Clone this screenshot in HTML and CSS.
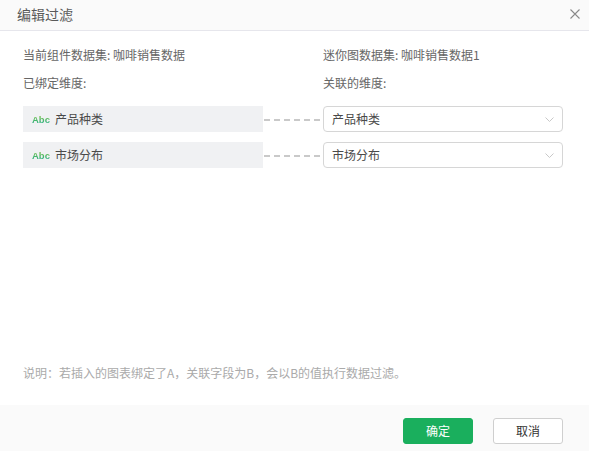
FILE: index.html
```html
<!DOCTYPE html>
<html lang="zh">
<head>
<meta charset="utf-8">
<title>编辑过滤</title>
<link rel="stylesheet" href="styles.css">
</head>
<body>
<div class="dialog">
  <div class="header">
    <span class="title">编辑过滤</span>
    <svg class="close" width="10" height="10" viewBox="0 0 10 10"><path d="M0.5 0.5 L9.5 9.5 M9.5 0.5 L0.5 9.5" stroke="#8a8a8a" stroke-width="1.1" fill="none"/></svg>
  </div>
  <div class="content">
    <div class="grid">
      <div class="label left">当前组件数据集: 咖啡销售数据</div>
      <div class="label right">迷你图数据集: 咖啡销售数据1</div>
      <div class="label left sub">已绑定维度:</div>
      <div class="label right sub">关联的维度:</div>

      <div class="field"><span class="abc">Abc</span><span class="fname">产品种类</span></div>
      <div class="dash"></div>
      <div class="select"><span>产品种类</span><svg class="chev" width="9" height="5" viewBox="0 0 9 5"><path d="M0.5 0.5 L4.5 4.5 L8.5 0.5" stroke="#c8c8c8" fill="none"/></svg></div>

      <div class="field"><span class="abc">Abc</span><span class="fname">市场分布</span></div>
      <div class="dash"></div>
      <div class="select"><span>市场分布</span><svg class="chev" width="9" height="5" viewBox="0 0 9 5"><path d="M0.5 0.5 L4.5 4.5 L8.5 0.5" stroke="#c8c8c8" fill="none"/></svg></div>
    </div>
    <div class="note">说明：若插入的图表绑定了A，关联字段为B，会以B的值执行数据过滤。</div>
  </div>
  <div class="footer">
    <button class="btn primary">确定</button>
    <button class="btn">取消</button>
  </div>
</div>
</body>
</html>
```

FILE: styles.css
```css
* { box-sizing: border-box; }
html, body { margin: 0; padding: 0; }
body {
  font-family: "Noto Sans CJK SC", "Noto Sans", sans-serif;
  font-size: 12px;
  color: #666;
  background: #fff;
}
.dialog {
  width: 589px;
  height: 451px;
  display: flex;
  flex-direction: column;
}
.header {
  height: 31px;
  background: #fafafa;
  border-bottom: 1px solid #e6e6ec;
  display: flex;
  align-items: center;
  justify-content: space-between;
  padding: 0 9px 2px 17px;
}
.title {
  font-size: 14px;
  color: #5a5a5a;
  line-height: 18px;
}
.close { display: block; }
.content {
  flex: 1;
  display: flex;
  flex-direction: column;
  justify-content: space-between;
  padding: 16px 26px 24px 23px;
}
.grid {
  display: grid;
  grid-template-columns: 240px 60px 240px;
  grid-auto-rows: auto;
  row-gap: 10px;
}
.label {
  line-height: 16px;
  color: #666;
  white-space: nowrap;
}
.label.left { grid-column: 1 / 3; }
.label.right { grid-column: 3; }
.label.sub { margin-top: 2px; margin-bottom: 5px; }
.field {
  height: 26px;
  background: #f0f1f3;
  display: flex;
  align-items: center;
  padding-left: 9px;
}
.abc {
  font-family: "Liberation Sans", Arial, sans-serif;
  font-size: 9.5px;
  font-weight: bold;
  background: linear-gradient(180deg, #86c23a 0%, #1bae8e 100%);
  -webkit-background-clip: text;
  background-clip: text;
  color: transparent;
  width: 23px;
}
.fname {
  color: #4a4a4a;
  line-height: 16px;
}
.dash {
  align-self: center;
  height: 2px;
  margin-top: 1px;
  background: repeating-linear-gradient(90deg, #c9c9c9 0 6px, transparent 6px 10px);
  background-position: 1px 0;
}
.select {
  height: 26px;
  border: 1px solid #d6d6d6;
  border-radius: 4px;
  display: flex;
  align-items: center;
  justify-content: space-between;
  padding: 0 8px 0 8px;
  color: #4a4a4a;
  line-height: 16px;
}
.chev { display: block; }
.note {
  color: #aaa;
  line-height: 16px;
}
.footer {
  height: 46px;
  background: #fafafa;
  display: flex;
  justify-content: flex-end;
  align-items: flex-start;
  gap: 20px;
  padding: 13px 26px 0 0;
}
.btn {
  width: 70px;
  height: 26px;
  border: 1px solid #cfcfcf;
  border-radius: 3px;
  background: #fff;
  color: #333;
  font-family: "Noto Sans CJK SC", sans-serif;
  font-size: 12px;
  line-height: 16px;
  padding: 0;
}
.btn.primary {
  background: #1aaf5d;
  border-color: #1aaf5d;
  color: #fff;
}
```
